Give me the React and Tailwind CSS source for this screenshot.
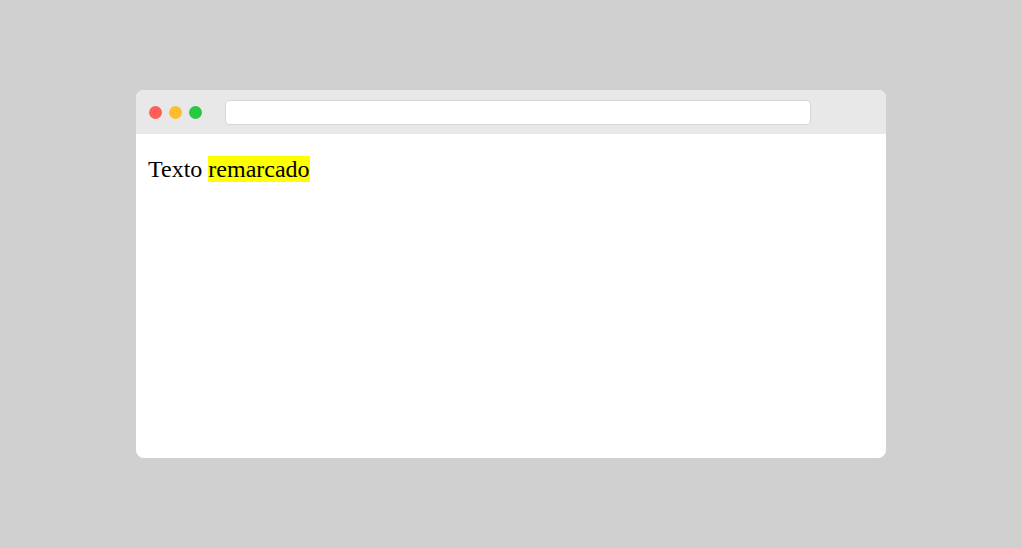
import React from 'react';

const App = () => {
    return (
        <div className="flex min-h-screen items-center justify-center bg-[#d0d0d0]">
            <div className="flex h-[368px] w-[750px] flex-col overflow-hidden rounded-[8px] bg-white">
                {/* Title bar */}
                <div className="flex h-[44px] shrink-0 items-center bg-[#e8e8e8] pl-[13px]">
                    <div className="flex items-center gap-[7px]">
                        <span className="h-[13px] w-[13px] rounded-full bg-[#ff5f57]" />
                        <span className="h-[13px] w-[13px] rounded-full bg-[#ffbd2e]" />
                        <span className="h-[13px] w-[13px] rounded-full bg-[#28c940]" />
                    </div>
                    <div className="ml-[23px] h-[25px] w-[586px] rounded-[4px] border border-[#d6d6d6] bg-white" />
                </div>

                {/* Content */}
                <div className="px-[12px] pt-[22px] font-['Liberation_Serif',serif] text-[24px] leading-[1.15] text-black">
                    Texto <mark className="bg-[#ffff00] text-black">remarcado</mark>
                </div>
            </div>
        </div>
    );
};

export default App;
